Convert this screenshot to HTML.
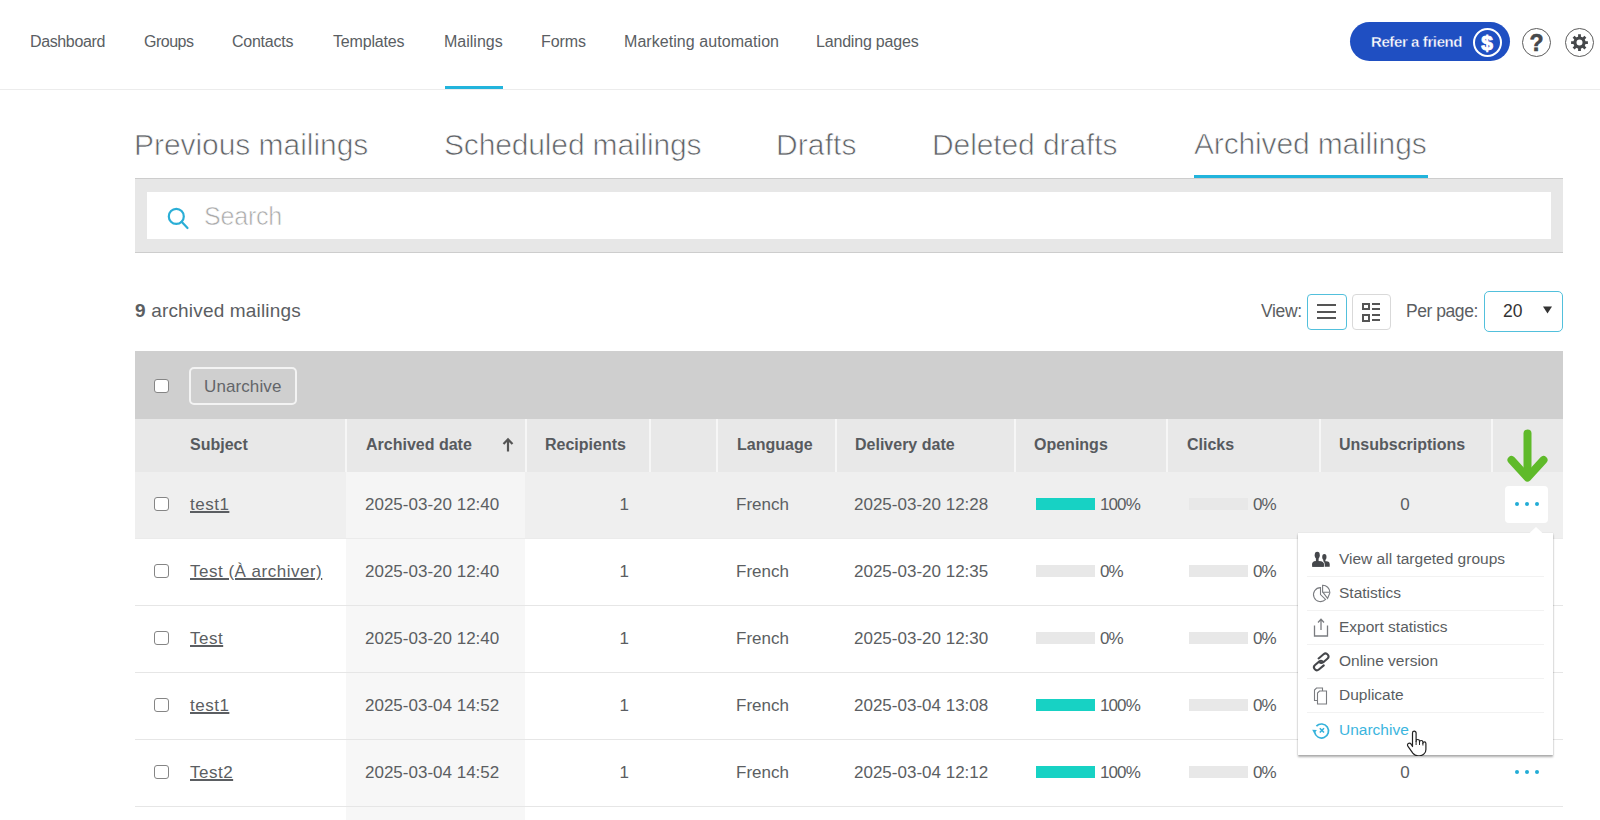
<!DOCTYPE html>
<html><head><meta charset="utf-8">
<style>
*{box-sizing:border-box;margin:0;padding:0}
html,body{width:1600px;height:820px;overflow:hidden;background:#fff}
body{position:relative;font-family:"Liberation Sans",sans-serif;color:#595d62}
.a{position:absolute;white-space:nowrap}
.nav{font-size:16px;line-height:20px;top:32px;color:#5a5e63}
.tab{font-size:30px;line-height:36px;top:127px;color:#606367;-webkit-text-stroke:0.7px #fff;paint-order:normal;letter-spacing:-0.15px}
.hdr{position:absolute;top:419px;height:53px;left:135px;width:1428px;background:#e8e8e8}
.sep{position:absolute;top:419px;height:53px;width:2px;background:#f6f6f6}
.hl{font-size:16px;font-weight:bold;line-height:20px;top:435px;color:#575a5e}
.row{position:absolute;left:135px;width:1428px;height:67px;border-bottom:1px solid #e6e6e6}
.rt{font-size:17px;line-height:20px;color:#5b5e62}
.cb{position:absolute;left:154px;width:14.5px;height:14px;border:1.5px solid #858585;border-radius:3px;background:#fff}
.bar{position:absolute;width:59px;height:12px;background:#e8e8e8}
.mi{font-size:15.5px;line-height:20px;color:#5a5d61;left:1339px}
.ms{position:absolute;left:1307px;width:237px;height:1px;background:#f2f2f2}
</style></head><body>

<!-- NAV -->
<div class="a nav" style="left:30px;letter-spacing:-0.37px">Dashboard</div>
<div class="a nav" style="left:144px;letter-spacing:-0.5px">Groups</div>
<div class="a nav" style="left:232px;letter-spacing:-0.25px">Contacts</div>
<div class="a nav" style="left:333px;letter-spacing:-0.18px">Templates</div>
<div class="a nav" style="left:444px">Mailings</div>
<div class="a nav" style="left:541px;letter-spacing:-0.1px">Forms</div>
<div class="a nav" style="left:624px;letter-spacing:0.06px">Marketing automation</div>
<div class="a nav" style="left:816px;letter-spacing:-0.19px">Landing pages</div>
<div class="a" style="left:0;top:89px;width:1600px;height:1px;background:#ececec"></div>
<div class="a" style="left:445px;top:86px;width:58px;height:3px;background:#22b4dc"></div>

<!-- refer button -->
<div class="a" style="left:1350px;top:22px;width:160px;height:39px;border-radius:20px;background:#1f4fc2"></div>
<div class="a" style="left:1371px;top:32px;font-size:15px;line-height:20px;font-weight:bold;color:#fff;letter-spacing:-0.4px;-webkit-text-stroke:0.35px #1f4fc2">Refer a friend</div>
<div class="a" style="left:1472.5px;top:28px;width:29px;height:29px;border:2px solid #fff;border-radius:50%"></div>
<div class="a" style="left:1472.5px;top:29px;width:29px;font-weight:bold;font-size:21px;line-height:28px;text-align:center;color:#fff;-webkit-text-stroke:0.9px #fff">$</div>
<div class="a" style="left:1522px;top:28px;width:29px;height:29px;border:1.9px solid #5c5c5c;border-radius:50%"></div>
<div class="a" style="left:1522px;top:28px;width:29px;font-weight:bold;font-size:23px;line-height:31px;text-align:center;color:#46484b;-webkit-text-stroke:0.6px #46484b">?</div>
<div class="a" style="left:1565px;top:28px;width:29px;height:29px;border:1.9px solid #5c5c5c;border-radius:50%"></div>
<svg class="a" style="left:1565px;top:28px" width="29" height="29" viewBox="0 0 29 29">
 <g transform="translate(14.5 14.6)">
  <circle r="4.6" fill="none" stroke="#46484b" stroke-width="3.2"/>
  <g stroke="#46484b" stroke-width="2.8">
   <path d="M0 -8.4V-5M0 8.4V5M-8.4 0H-5M8.4 0H5"/>
   <path d="M-5.9 -5.9L-3.6 -3.6M5.9 5.9L3.6 3.6M-5.9 5.9L-3.6 3.6M5.9 -5.9L3.6 -3.6"/>
  </g>
 </g>
</svg>

<!-- TABS -->
<div class="a tab" style="left:134px;letter-spacing:-0.05px">Previous mailings</div>
<div class="a tab" style="left:444px">Scheduled mailings</div>
<div class="a tab" style="left:776px;letter-spacing:0.1px">Drafts</div>
<div class="a tab" style="left:932px;letter-spacing:-0.1px">Deleted drafts</div>
<div class="a tab" style="left:1194px;top:126px">Archived mailings</div>
<div class="a" style="left:1194px;top:175px;width:234px;height:3px;background:#22b4dc"></div>

<!-- SEARCH -->
<div class="a" style="left:135px;top:178px;width:1428px;height:75px;background:#e7e7e7;border-top:1px solid #cdcdcd;border-bottom:1px solid #cdcdcd"></div>
<div class="a" style="left:147px;top:192px;width:1404px;height:47px;background:#fff"></div>
<svg class="a" style="left:160px;top:200px" width="36" height="36" viewBox="0 0 36 36">
 <circle cx="16.3" cy="16.4" r="7.5" fill="none" stroke="#2aaed6" stroke-width="2.2"/>
 <line x1="21.6" y1="21.8" x2="27.5" y2="28" stroke="#2aaed6" stroke-width="2.2" stroke-linecap="round"/>
</svg>
<div class="a" style="left:204px;top:200px;font-size:25px;line-height:32px;color:#a9a9a9;letter-spacing:-0.2px;-webkit-text-stroke:0.6px #fff">Search</div>

<!-- COUNT / VIEW -->
<div class="a" style="left:135px;top:298.5px;font-size:19px;line-height:24px;color:#5b5e62;letter-spacing:0.17px"><b>9</b> archived mailings</div>
<div class="a" style="left:1261px;top:300px;font-size:17.5px;line-height:22px;color:#5b5e62;letter-spacing:-0.35px">View:</div>
<div class="a" style="left:1307px;top:294px;width:40px;height:36px;border:1.5px solid #52c0dc;border-radius:4px;background:#fff"></div>
<div class="a" style="left:1317px;top:304px;width:19px;height:2.2px;background:#555"></div>
<div class="a" style="left:1317px;top:311px;width:19px;height:2.2px;background:#555"></div>
<div class="a" style="left:1317px;top:317px;width:19px;height:2.2px;background:#555"></div>
<div class="a" style="left:1352px;top:294px;width:39px;height:36px;border:1px solid #d9d9d9;border-radius:4px;background:#fff"></div>
<div class="a" style="left:1362px;top:302.5px;width:7.5px;height:7.5px;border:2.8px solid #555"></div>
<div class="a" style="left:1362px;top:314px;width:7.5px;height:7.5px;border:2.8px solid #555"></div>
<div class="a" style="left:1372px;top:303px;width:8px;height:2.4px;background:#555"></div>
<div class="a" style="left:1372px;top:308px;width:8px;height:2.4px;background:#555"></div>
<div class="a" style="left:1372px;top:314px;width:8px;height:2.4px;background:#555"></div>
<div class="a" style="left:1372px;top:319px;width:8px;height:2.4px;background:#555"></div>
<div class="a" style="left:1406px;top:300px;font-size:17.5px;line-height:22px;color:#5b5e62;letter-spacing:-0.45px">Per page:</div>
<div class="a" style="left:1484px;top:291px;width:79px;height:41px;border:1.5px solid #52c0dc;border-radius:5px;background:#fff"></div>
<div class="a" style="left:1503px;top:300px;font-size:17.5px;line-height:22px;color:#333">20</div>
<svg class="a" style="left:1542px;top:305px" width="11" height="9" viewBox="0 0 11 9"><path d="M1 1.5h9L5.5 8.5z" fill="#333"/></svg>

<!-- ACTION BAR -->
<div class="a" style="left:135px;top:351px;width:1428px;height:68px;background:#cfcfcf"></div>
<div class="cb" style="top:378.5px"></div>
<div class="a" style="left:189px;top:367px;width:108px;height:38px;border:2px solid #f3f3f3;border-radius:5px"></div>
<div class="a" style="left:204px;top:377px;font-size:17px;line-height:20px;color:#636569;letter-spacing:0.1px">Unarchive</div>

<!-- HEADER -->
<div class="hdr"></div>
<div class="sep" style="left:345px"></div>
<div class="sep" style="left:525px"></div>
<div class="sep" style="left:649px"></div>
<div class="sep" style="left:716px"></div>
<div class="sep" style="left:835px"></div>
<div class="sep" style="left:1014px"></div>
<div class="sep" style="left:1166px"></div>
<div class="sep" style="left:1319px"></div>
<div class="sep" style="left:1491px"></div>
<div class="a hl" style="left:190px">Subject</div>
<div class="a hl" style="left:366px">Archived date</div>
<svg class="a" style="left:502px;top:437px" width="12" height="16" viewBox="0 0 12 16"><path d="M6 14.5V2.5M1.5 7L6 2.3 10.5 7" fill="none" stroke="#555" stroke-width="2.2"/></svg>
<div class="a hl" style="left:545px">Recipients</div>
<div class="a hl" style="left:737px">Language</div>
<div class="a hl" style="left:855px">Delivery date</div>
<div class="a hl" style="left:1034px">Openings</div>
<div class="a hl" style="left:1187px">Clicks</div>
<div class="a hl" style="left:1339px">Unsubscriptions</div>

<!-- ROWS -->
<div id="rows"></div>
<div class="row" style="top:472px;background:#efefef;border-bottom-color:#ebebeb"></div>
<div class="a" style="left:346px;top:472px;width:179px;height:66px;background:#f5f5f5"></div>
<div class="cb" style="top:497px"></div>
<div class="a rt" style="left:190px;top:494.6px;text-decoration:underline;text-underline-offset:1px;text-decoration-thickness:1.5px;letter-spacing:0.5px">test1</div>
<div class="a rt" style="left:365px;top:494.6px">2025-03-20 12:40</div>
<div class="a rt" style="left:600px;width:29px;text-align:right;top:494.6px">1</div>
<div class="a rt" style="left:736px;top:494.6px">French</div>
<div class="a rt" style="left:854px;top:494.6px">2025-03-20 12:28</div>
<div class="bar" style="left:1036px;top:498px;background:#17d2c4"></div>
<div class="a rt" style="left:1100px;top:494.6px;letter-spacing:-0.9px">100%</div>
<div class="bar" style="left:1189px;top:498px"></div>
<div class="a rt" style="left:1253px;top:494.6px;letter-spacing:-1px">0%</div>
<div class="a rt" style="left:1395px;width:20px;text-align:center;top:494.6px">0</div>
<div class="a" style="left:1505px;top:486px;width:43px;height:37px;background:#fff;border-radius:4px"></div>
<div class="a" style="left:1514.8px;top:501.8px;width:4.4px;height:4.4px;border-radius:50%;background:#22acd6"></div>
<div class="a" style="left:1524.8px;top:501.8px;width:4.4px;height:4.4px;border-radius:50%;background:#22acd6"></div>
<div class="a" style="left:1534.8px;top:501.8px;width:4.4px;height:4.4px;border-radius:50%;background:#22acd6"></div>
<div class="row" style="top:539px;background:#fff;border-bottom-color:#e6e6e6"></div>
<div class="a" style="left:346px;top:539px;width:179px;height:66px;background:#f7f7f7"></div>
<div class="cb" style="top:564px"></div>
<div class="a rt" style="left:190px;top:561.6px;text-decoration:underline;text-underline-offset:1px;text-decoration-thickness:1.5px;letter-spacing:0.5px">Test (À archiver)</div>
<div class="a rt" style="left:365px;top:561.6px">2025-03-20 12:40</div>
<div class="a rt" style="left:600px;width:29px;text-align:right;top:561.6px">1</div>
<div class="a rt" style="left:736px;top:561.6px">French</div>
<div class="a rt" style="left:854px;top:561.6px">2025-03-20 12:35</div>
<div class="bar" style="left:1036px;top:565px;background:#e8e8e8"></div>
<div class="a rt" style="left:1100px;top:561.6px;letter-spacing:-0.9px">0%</div>
<div class="bar" style="left:1189px;top:565px"></div>
<div class="a rt" style="left:1253px;top:561.6px;letter-spacing:-1px">0%</div>
<div class="a rt" style="left:1395px;width:20px;text-align:center;top:561.6px">0</div>
<div class="a" style="left:1514.8px;top:568.8px;width:4.4px;height:4.4px;border-radius:50%;background:#22acd6"></div>
<div class="a" style="left:1524.8px;top:568.8px;width:4.4px;height:4.4px;border-radius:50%;background:#22acd6"></div>
<div class="a" style="left:1534.8px;top:568.8px;width:4.4px;height:4.4px;border-radius:50%;background:#22acd6"></div>
<div class="row" style="top:606px;background:#fff;border-bottom-color:#e6e6e6"></div>
<div class="a" style="left:346px;top:606px;width:179px;height:66px;background:#f7f7f7"></div>
<div class="cb" style="top:631px"></div>
<div class="a rt" style="left:190px;top:628.6px;text-decoration:underline;text-underline-offset:1px;text-decoration-thickness:1.5px;letter-spacing:0.5px">Test</div>
<div class="a rt" style="left:365px;top:628.6px">2025-03-20 12:40</div>
<div class="a rt" style="left:600px;width:29px;text-align:right;top:628.6px">1</div>
<div class="a rt" style="left:736px;top:628.6px">French</div>
<div class="a rt" style="left:854px;top:628.6px">2025-03-20 12:30</div>
<div class="bar" style="left:1036px;top:632px;background:#e8e8e8"></div>
<div class="a rt" style="left:1100px;top:628.6px;letter-spacing:-0.9px">0%</div>
<div class="bar" style="left:1189px;top:632px"></div>
<div class="a rt" style="left:1253px;top:628.6px;letter-spacing:-1px">0%</div>
<div class="a rt" style="left:1395px;width:20px;text-align:center;top:628.6px">0</div>
<div class="a" style="left:1514.8px;top:635.8px;width:4.4px;height:4.4px;border-radius:50%;background:#22acd6"></div>
<div class="a" style="left:1524.8px;top:635.8px;width:4.4px;height:4.4px;border-radius:50%;background:#22acd6"></div>
<div class="a" style="left:1534.8px;top:635.8px;width:4.4px;height:4.4px;border-radius:50%;background:#22acd6"></div>
<div class="row" style="top:673px;background:#fff;border-bottom-color:#e6e6e6"></div>
<div class="a" style="left:346px;top:673px;width:179px;height:66px;background:#f7f7f7"></div>
<div class="cb" style="top:698px"></div>
<div class="a rt" style="left:190px;top:695.6px;text-decoration:underline;text-underline-offset:1px;text-decoration-thickness:1.5px;letter-spacing:0.5px">test1</div>
<div class="a rt" style="left:365px;top:695.6px">2025-03-04 14:52</div>
<div class="a rt" style="left:600px;width:29px;text-align:right;top:695.6px">1</div>
<div class="a rt" style="left:736px;top:695.6px">French</div>
<div class="a rt" style="left:854px;top:695.6px">2025-03-04 13:08</div>
<div class="bar" style="left:1036px;top:699px;background:#17d2c4"></div>
<div class="a rt" style="left:1100px;top:695.6px;letter-spacing:-0.9px">100%</div>
<div class="bar" style="left:1189px;top:699px"></div>
<div class="a rt" style="left:1253px;top:695.6px;letter-spacing:-1px">0%</div>
<div class="a rt" style="left:1395px;width:20px;text-align:center;top:695.6px">0</div>
<div class="a" style="left:1514.8px;top:702.8px;width:4.4px;height:4.4px;border-radius:50%;background:#22acd6"></div>
<div class="a" style="left:1524.8px;top:702.8px;width:4.4px;height:4.4px;border-radius:50%;background:#22acd6"></div>
<div class="a" style="left:1534.8px;top:702.8px;width:4.4px;height:4.4px;border-radius:50%;background:#22acd6"></div>
<div class="row" style="top:740px;background:#fff;border-bottom-color:#e6e6e6"></div>
<div class="a" style="left:346px;top:740px;width:179px;height:66px;background:#f7f7f7"></div>
<div class="cb" style="top:765px"></div>
<div class="a rt" style="left:190px;top:762.6px;text-decoration:underline;text-underline-offset:1px;text-decoration-thickness:1.5px;letter-spacing:0.5px">Test2</div>
<div class="a rt" style="left:365px;top:762.6px">2025-03-04 14:52</div>
<div class="a rt" style="left:600px;width:29px;text-align:right;top:762.6px">1</div>
<div class="a rt" style="left:736px;top:762.6px">French</div>
<div class="a rt" style="left:854px;top:762.6px">2025-03-04 12:12</div>
<div class="bar" style="left:1036px;top:766px;background:#17d2c4"></div>
<div class="a rt" style="left:1100px;top:762.6px;letter-spacing:-0.9px">100%</div>
<div class="bar" style="left:1189px;top:766px"></div>
<div class="a rt" style="left:1253px;top:762.6px;letter-spacing:-1px">0%</div>
<div class="a rt" style="left:1395px;width:20px;text-align:center;top:762.6px">0</div>
<div class="a" style="left:1514.8px;top:769.8px;width:4.4px;height:4.4px;border-radius:50%;background:#22acd6"></div>
<div class="a" style="left:1524.8px;top:769.8px;width:4.4px;height:4.4px;border-radius:50%;background:#22acd6"></div>
<div class="a" style="left:1534.8px;top:769.8px;width:4.4px;height:4.4px;border-radius:50%;background:#22acd6"></div>
<div class="row" style="top:807px;background:#fff;border-bottom-color:#e6e6e6"></div>
<div class="a" style="left:346px;top:807px;width:179px;height:66px;background:#f7f7f7"></div>
<div class="cb" style="top:832px"></div>
<div class="a rt" style="left:190px;top:829.6px;text-decoration:underline;text-underline-offset:1px;text-decoration-thickness:1.5px;letter-spacing:0.5px">Test3</div>
<div class="a rt" style="left:365px;top:829.6px">2025-03-04 14:50</div>
<div class="a rt" style="left:600px;width:29px;text-align:right;top:829.6px">1</div>
<div class="a rt" style="left:736px;top:829.6px">French</div>
<div class="a rt" style="left:854px;top:829.6px">2025-03-04 12:10</div>
<div class="bar" style="left:1036px;top:833px;background:#17d2c4"></div>
<div class="a rt" style="left:1100px;top:829.6px;letter-spacing:-0.9px">100%</div>
<div class="bar" style="left:1189px;top:833px"></div>
<div class="a rt" style="left:1253px;top:829.6px;letter-spacing:-1px">0%</div>
<div class="a rt" style="left:1395px;width:20px;text-align:center;top:829.6px">0</div>
<div class="a" style="left:1514.8px;top:836.8px;width:4.4px;height:4.4px;border-radius:50%;background:#22acd6"></div>
<div class="a" style="left:1524.8px;top:836.8px;width:4.4px;height:4.4px;border-radius:50%;background:#22acd6"></div>
<div class="a" style="left:1534.8px;top:836.8px;width:4.4px;height:4.4px;border-radius:50%;background:#22acd6"></div>
<!-- MENU -->
<div class="a" style="left:1298px;top:533px;width:255px;height:222px;background:#fff;box-shadow:0 1.5px 2px rgba(0,0,0,0.32),0 0 1px rgba(0,0,0,0.14)"></div>
<svg class="a" style="left:1526px;top:526px" width="20" height="8" viewBox="0 0 20 8"><path d="M3 7.5L10 1l7 6.5z" fill="#fff"/></svg>
<div class="ms" style="top:576px"></div>
<div class="ms" style="top:610px"></div>
<div class="ms" style="top:644px"></div>
<div class="ms" style="top:678px"></div>
<div class="ms" style="top:712px"></div>
<div class="a mi" style="top:549px">View all targeted groups</div>
<div class="a mi" style="top:583px">Statistics</div>
<div class="a mi" style="top:617px">Export statistics</div>
<div class="a mi" style="top:651px">Online version</div>
<div class="a mi" style="top:685px">Duplicate</div>
<div class="a mi" style="top:720px;color:#3bb5de">Unarchive</div>
<!-- icons -->
<svg class="a" style="left:1310px;top:550px" width="22" height="18" viewBox="0 0 22 18">
 <g fill="#45474b">
  <ellipse cx="14.35" cy="6.9" rx="2.15" ry="2.95"/>
  <rect x="13.3" y="9" width="2.1" height="3"/>
  <path d="M12 16.8V13.6Q12 11.4 15 11.3H16.3Q19.7 11.5 19.7 14.2V16.8Z"/>
  <path d="M2.3 16.8V14.2Q2.3 11.4 5.6 11.2H9.2Q13.8 11.4 13.8 14.2V16.8Z" stroke="#fff" stroke-width="1.8" paint-order="stroke"/>
  <ellipse cx="7.25" cy="5.3" rx="2.55" ry="3.45" stroke="#fff" stroke-width="1.6" paint-order="stroke"/>
  <rect x="5.9" y="7.5" width="2.7" height="4.5"/>
  <path d="M2.3 16.8V14.2Q2.3 11.4 5.6 11.2H9.2Q13.8 11.4 13.8 14.2V16.8Z"/>
 </g>
</svg>
<svg class="a" style="left:1310px;top:583px" width="22" height="20" viewBox="0 0 22 20">
 <g fill="none" stroke="#7a7c80" stroke-width="1.1">
  <path d="M10.5 4.6A7 7 0 1 0 15.6 16.4L10.5 11.6z"/>
  <path d="M12.6 2.3A7 7 0 0 1 19.8 9.2H12.6z"/>
  <path d="M13 9.3L17.6 15.3 20 9.6"/>
 </g>
</svg>
<svg class="a" style="left:1310px;top:617px" width="22" height="20" viewBox="0 0 22 20">
 <g fill="none" stroke="#7a7c80" stroke-width="1.3">
  <path d="M4.5 8.5V19H17.5V8.5"/>
  <path d="M11 13V2.5M8 5.5L11 2.3 14 5.5"/>
 </g>
</svg>
<svg class="a" style="left:1310px;top:651px" width="22" height="22" viewBox="0 0 22 22">
 <g transform="translate(11.2 10.9) rotate(-40) scale(1.2)" fill="none" stroke="#45474b" stroke-width="1.7" stroke-linecap="round">
  <path d="M0.2 -3.6H5.6A2.45 2.45 0 0 1 5.6 1.3H1.2A2.45 2.45 0 0 1 -1.25 -1.15"/>
  <path d="M-0.2 3.6H-5.6A2.45 2.45 0 0 1 -5.6 -1.3H-1.2A2.45 2.45 0 0 1 1.25 1.15"/>
 </g>
</svg>
<svg class="a" style="left:1310px;top:685px" width="22" height="22" viewBox="0 0 22 22">
 <g fill="#fff" stroke="#7a7c80" stroke-width="1.1">
  <path d="M6.5 3H12.5V15.5H4.5V5z"/>
  <path d="M9.5 6H16.5V19H7.5V8z"/>
 </g>
</svg>
<svg class="a" style="left:1310px;top:720px" width="22" height="22" viewBox="0 0 22 22">
 <g fill="none" stroke="#34b2db" stroke-width="1.7">
  <path d="M4.6 12.2A7 7 0 1 0 6.4 6.2"/>
  <path d="M9.8 8.3L14 12.5M14 8.3L9.8 12.5" stroke-width="1.6"/>
 </g>
 <path d="M2.2 9.8L6.9 9.9 4.3 13.6z" fill="#34b2db"/>
</svg>
<!-- cursor -->
<svg class="a" style="left:1405px;top:729px" width="22" height="27" viewBox="0 0 22 27">
 <path d="M7.5 17.5V4a1.8 1.8 0 0 1 3.6 0v8.3c0-1.1.8-1.8 1.7-1.8s1.7.7 1.7 1.8v1c0-1.1.8-1.8 1.7-1.8s1.7.7 1.7 1.8v1c.1-1.1.8-1.5 1.5-1.5s1.5.6 1.5 1.6v6c0 3.5-2.8 6.4-6.5 6.4h-1.4c-2.2 0-3.9-.9-5.2-2.6L3 17.4c-.8-1-.6-2.2.3-2.8s2-.4 2.7.4z" fill="#fff" stroke="#222" stroke-width="1.2" stroke-linejoin="round"/>
 <path d="M11.1 12v4M14.5 13v3M17.9 14v2.5" stroke="#222" stroke-width="1"/>
</svg>
<!-- green arrow -->
<svg class="a" style="left:1500px;top:424px" width="56" height="62" viewBox="0 0 56 62">
 <g fill="none" stroke="#5fba2a" stroke-width="8" stroke-linecap="round" stroke-linejoin="round">
  <path d="M27.5 9.5V52"/>
  <path d="M11.5 36L27.5 53.5 43.5 36"/>
 </g>
</svg>


</body></html>
